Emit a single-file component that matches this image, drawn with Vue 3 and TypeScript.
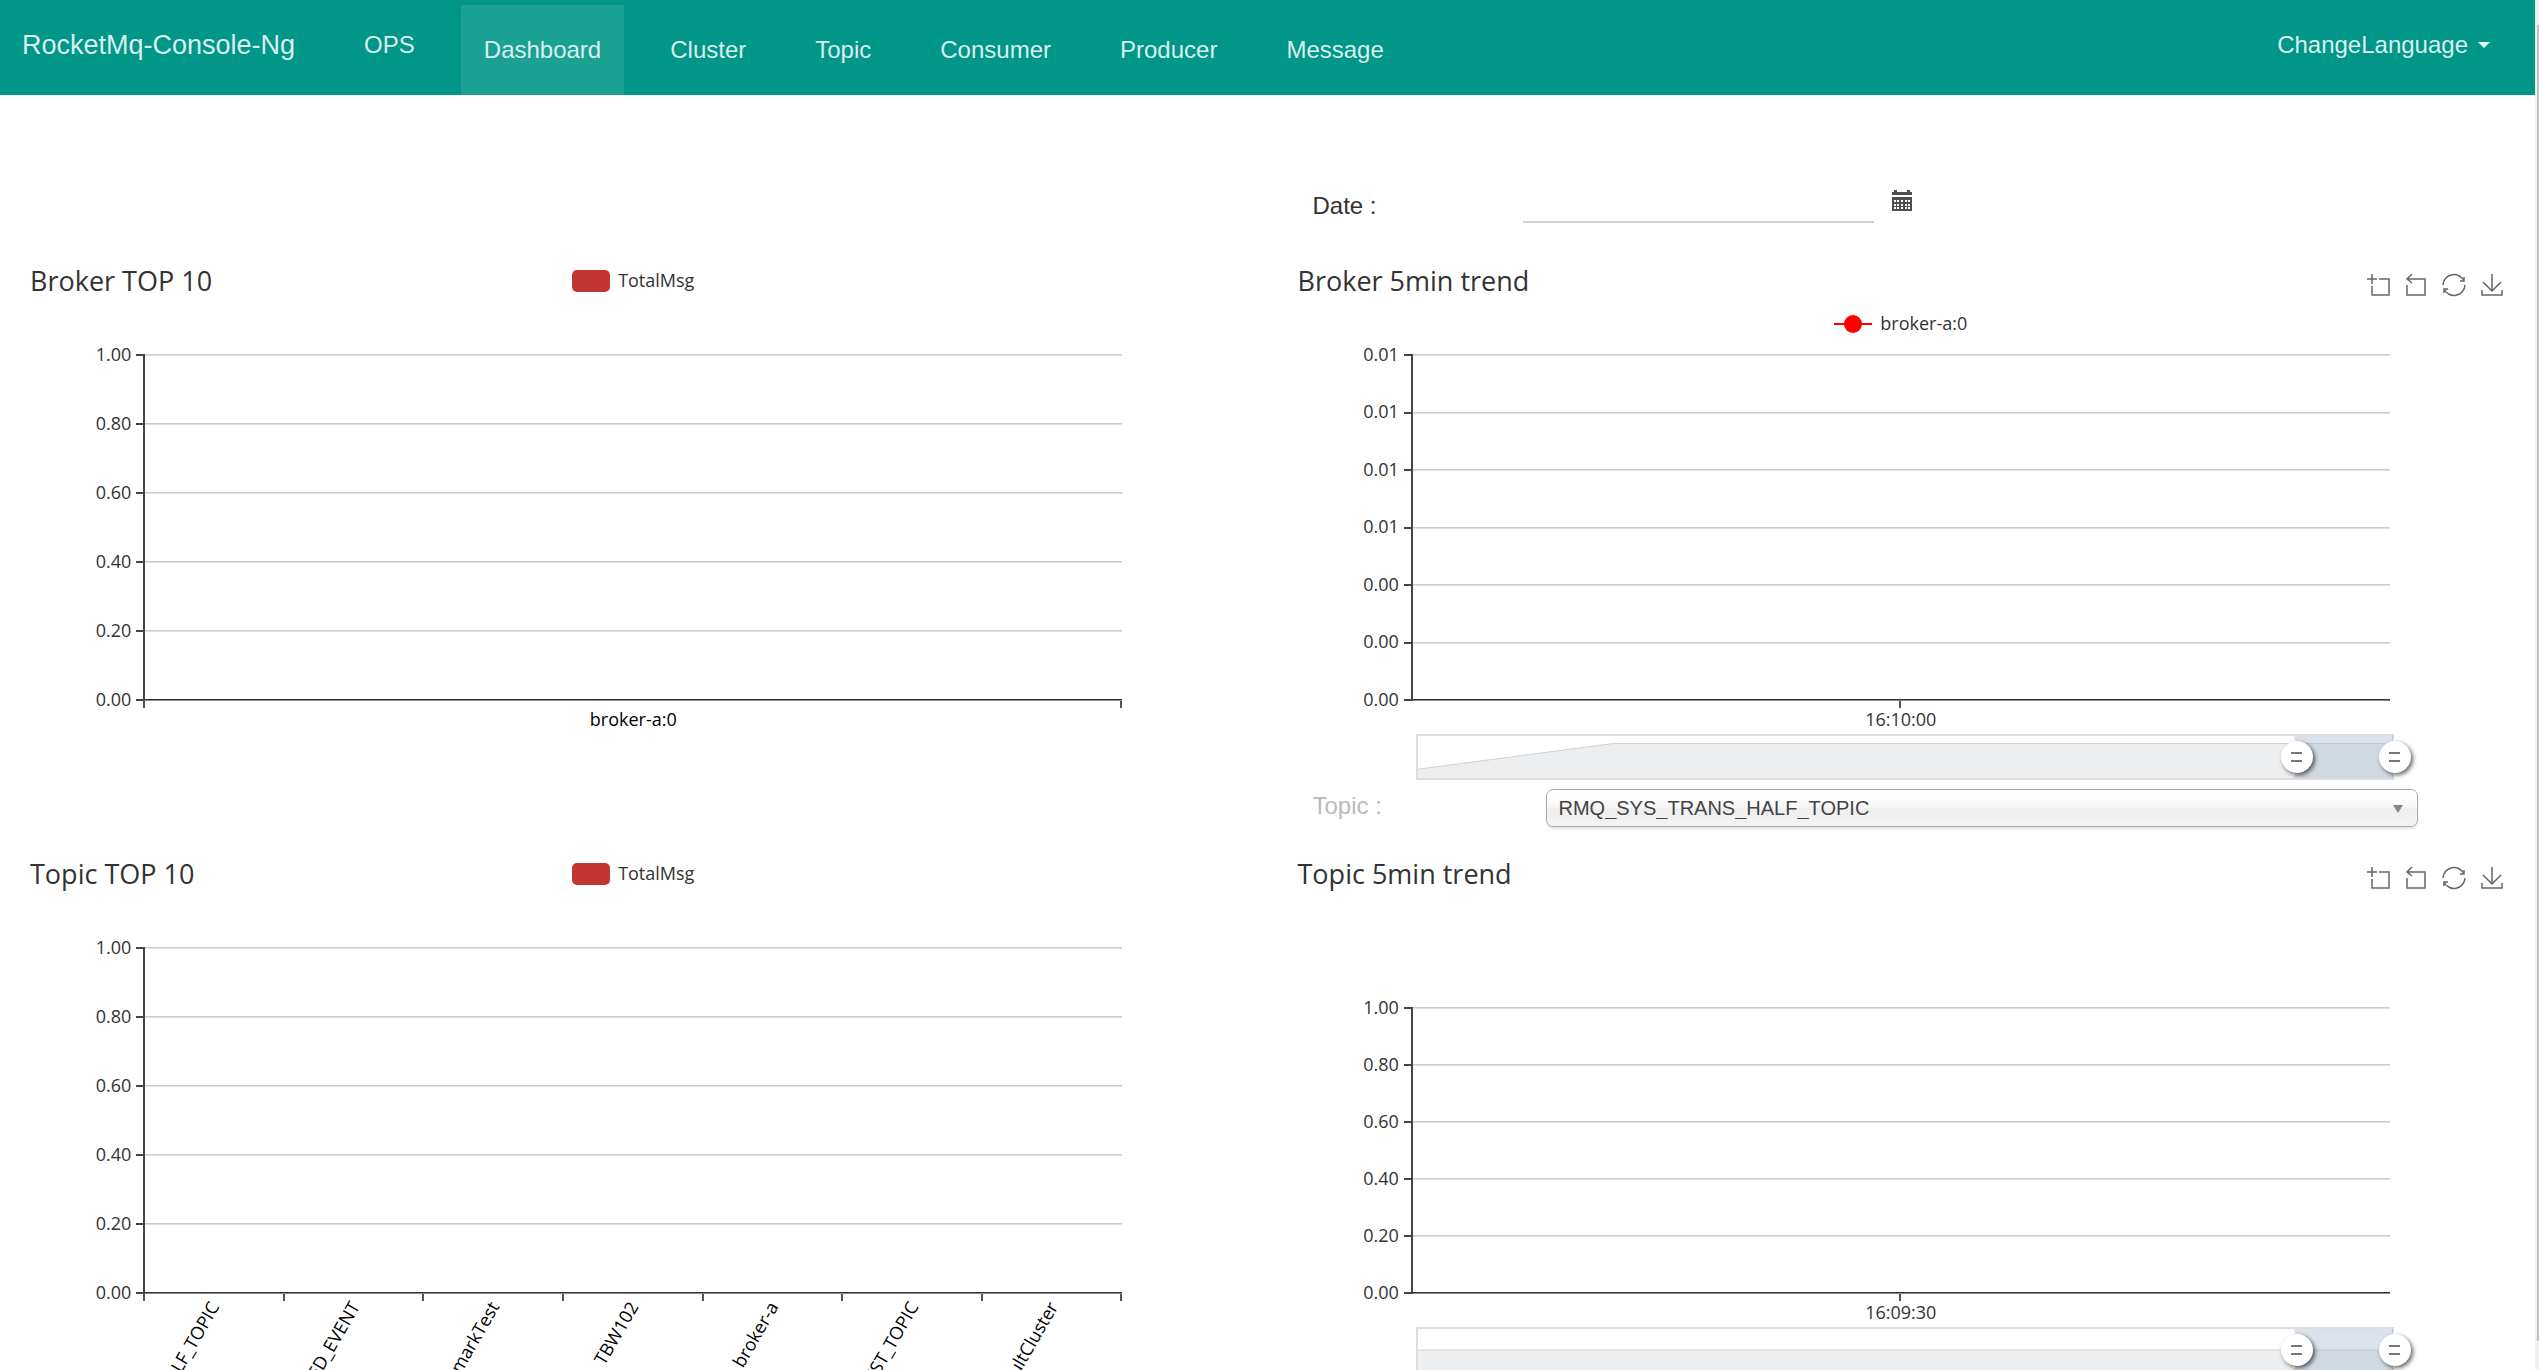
<script setup lang="ts">
import { ref } from 'vue'

interface Chart {
  id: string
  title: string
  legend?: { label: string; kind: 'bar' | 'line' }
  yLabels: string[]
  xLabels: string[]
  rotated?: boolean
  trend: boolean
  // outline of the series drawn inside the zoom bar, in percent of its box
  shadow?: string
}

const unitScale = ['1.00', '0.80', '0.60', '0.40', '0.20', '0.00']

const rows: Chart[][] = [
  [
    {
      id: 'broker-top',
      title: 'Broker TOP 10',
      legend: { label: 'TotalMsg', kind: 'bar' },
      yLabels: unitScale,
      xLabels: ['broker-a:0'],
      trend: false,
    },
    {
      id: 'broker-trend',
      title: 'Broker 5min trend',
      legend: { label: 'broker-a:0', kind: 'line' },
      yLabels: ['0.01', '0.01', '0.01', '0.01', '0.00', '0.00', '0.00'],
      xLabels: ['16:10:00'],
      trend: true,
      shadow: '0,79 20,18 100,18',
    },
  ],
  [
    {
      id: 'topic-top',
      title: 'Topic TOP 10',
      legend: { label: 'TotalMsg', kind: 'bar' },
      yLabels: unitScale,
      xLabels: [
        'RMQ_SYS_TRANS_HALF_TOPIC',
        'OFFSET_MOVED_EVENT',
        'BenchmarkTest',
        'TBW102',
        'broker-a',
        'SELF_TEST_TOPIC',
        'DefaultCluster',
      ],
      rotated: true,
      trend: false,
    },
    {
      id: 'topic-trend',
      title: 'Topic 5min trend',
      yLabels: unitScale,
      xLabels: ['16:09:30'],
      trend: true,
      shadow: '0,50 100,50',
    },
  ],
]

const links = ['Dashboard', 'Cluster', 'Topic', 'Consumer', 'Producer', 'Message']
const active = ref('Dashboard')
const date = ref('')
const topic = ref('RMQ_SYS_TRANS_HALF_TOPIC')

const tools = [
  { name: 'Zoom', d: 'M1 6h10M6 1v10M13 6h10v16H6v-9' },
  { name: 'Zoom reset', d: 'M3 12v10h18V6H3M8 1L3 6l5 4' },
  { name: 'Restore', d: 'M1 12A11 11 0 0 1 22 8M22 4v4h-4M23 12A11 11 0 0 1 2 16M2 20v-4h4' },
  { name: 'Save as image', d: 'M12 1v17M3 9l9 9 9-9M2 17v5h20v-5' },
]
</script>

<template>
  <div class="page">
    <div class="content">
      <nav class="navbar">
        <a class="brand" href="#">RocketMq-Console-Ng</a>
        <a class="nav-link ops" href="#ops">OPS</a>
        <a
          v-for="link in links"
          :key="link"
          class="nav-link"
          :class="{ active: link === active }"
          :href="'#' + link.toLowerCase()"
          @click="active = link"
          >{{ link }}</a
        >
        <button class="language" type="button">
          ChangeLanguage <span class="caret"></span>
        </button>
      </nav>

      <div class="filter date-filter">
        <label for="date">Date :</label>
        <input id="date" v-model="date" type="text" />
        <button class="calendar" type="button" aria-label="Pick a date">
          <svg viewBox="0 0 20 22" width="20" height="22">
            <path
              fill="#4f4f4f"
              fill-rule="evenodd"
              d="M0 2h2V0h3v2h10V0h3v2h2v3H0zM0 7h20v14H0zM2 10v2h2v-2zM5 10v2h2v-2zM9 10v2h2v-2zM13 10v2h2v-2zM16 10v2h2v-2zM2 14v2h2v-2zM5 14v2h2v-2zM9 14v2h2v-2zM13 14v2h2v-2zM16 14v2h2v-2zM2 17v2h2v-2zM5 17v2h2v-2zM9 17v2h2v-2zM13 17v2h2v-2zM16 17v2h2v-2z"
            />
          </svg>
        </button>
      </div>

      <template v-for="(row, r) in rows" :key="r">
        <div v-if="r === 1" class="filter topic-filter">
          <label for="topic">Topic :</label>
          <div class="select-box">
            <select id="topic" v-model="topic">
              <option>RMQ_SYS_TRANS_HALF_TOPIC</option>
            </select>
            <span class="select-arrow"></span>
          </div>
        </div>

        <div class="chart-row">
          <section v-for="c in row" :key="c.id" class="chart">
            <header class="head" :class="{ trend: c.trend, tall: c.trend && !c.legend }">
              <h2>{{ c.title }}</h2>
              <div v-if="c.legend" class="legend">
                <span :class="['mark', c.legend.kind]"></span>
                <span>{{ c.legend.label }}</span>
              </div>
              <div v-if="c.trend" class="toolbox">
                <button v-for="t in tools" :key="t.name" type="button" :aria-label="t.name">
                  <svg viewBox="0 0 24 24" width="24" height="24"><path :d="t.d" /></svg>
                </button>
              </div>
            </header>

            <div class="body">
              <div class="y-axis">
                <div v-for="(y, i) in c.yLabels" :key="i" class="y-label">
                  <span>{{ y }}</span>
                </div>
              </div>
              <div class="plot" :class="{ short: c.trend && !c.legend }">
                <i v-for="(y, i) in c.yLabels" :key="i" class="grid-line"></i>
              </div>
              <div class="x-axis">
                <div class="ticks" :class="{ middle: c.trend }">
                  <i v-for="n in c.trend ? 2 : c.xLabels.length" :key="n"></i>
                </div>
                <div class="x-labels" :class="{ rotated: c.rotated, time: c.trend }">
                  <div v-for="x in c.xLabels" :key="x" class="x-cell">
                    <span>{{ x }}</span>
                  </div>
                </div>
                <div v-if="c.trend" class="zoom">
                  <svg viewBox="0 0 100 100" preserveAspectRatio="none">
                    <polygon :points="'0,100 ' + c.shadow + ' 100,100'" fill="#eceef0" />
                    <polyline :points="c.shadow" />
                  </svg>
                  <div class="window"></div>
                  <input type="range" min="0" max="100" value="90" aria-label="Range start" />
                  <input type="range" min="0" max="100" value="100" aria-label="Range end" />
                </div>
              </div>
            </div>
          </section>
        </div>
      </template>
    </div>
    <div class="scrollbar"><div class="thumb"></div></div>
  </div>
</template>

<style>
body {
  margin: 0;
  background: #fff;
}
</style>

<style scoped>
* {
  box-sizing: border-box;
}

.page {
  display: flex;
  height: 100vh;
  overflow: hidden;
  font-family: 'Liberation Sans', Arial, sans-serif;
  font-size: 24px;
  color: #333;
}

.content {
  flex: 1;
  min-width: 0;
}

.scrollbar {
  width: 4px;
  padding: 25px 0 29px 2px;
  background: #f0f0f0;
}

.thumb {
  height: 100%;
  background: #c1c1c1;
}

button {
  padding: 0;
  border: 0;
  background: none;
  font: inherit;
  cursor: pointer;
}

.navbar {
  display: flex;
  gap: 23px;
  height: 95px;
  padding: 0 45px 0 22px;
  background: #009688;
}

.navbar a,
.language {
  color: #d9efed;
  line-height: 90px;
  text-decoration: none;
}

.brand {
  margin-right: 23px;
  font-size: 27px;
}

.navbar .nav-link {
  margin-top: 5px;
  padding: 0 23px;
}

.navbar .ops {
  margin-top: 0;
}

.nav-link.active {
  background: #1aa193;
}

.language {
  display: flex;
  align-items: center;
  gap: 10px;
  height: 90px;
  margin-left: auto;
}

.caret {
  border: 6px solid transparent;
  border-top-color: #e6f4f3;
  border-bottom: 0;
}

.filter {
  display: grid;
  align-items: start;
  margin-left: 50%;
  padding-left: 45px;
}

.date-filter {
  grid-template-columns: 210px minmax(0, 351fr) minmax(0, 661fr);
  height: 170px;
  padding-top: 88px;
}

.date-filter label {
  padding-top: 8px;
  line-height: 30px;
}

.date-filter input {
  height: 40px;
  padding: 0;
  border: 0;
  border-bottom: 2px solid #d2d2d2;
  outline: 0;
  background: none;
  font: inherit;
}

.calendar {
  width: 20px;
  height: 22px;
  margin: 7px 0 0 18px;
}

.calendar svg,
.toolbox svg {
  display: block;
}

.topic-filter {
  grid-template-columns: 233px minmax(0, 872fr) minmax(0, 117fr);
  height: 69px;
}

.topic-filter label {
  color: #bbb;
  line-height: 34px;
}

.select-box {
  position: relative;
}

.select-box select {
  display: block;
  width: 100%;
  height: 38px;
  padding: 0 12px;
  border: 1px solid #aaa;
  border-radius: 7px;
  background: linear-gradient(#fff 20%, #f6f6f6 50%, #eee 52%, #f4f4f4 100%);
  box-shadow: 0 2px 2px rgba(0, 0, 0, 0.1);
  appearance: none;
  color: #444;
  font-family: inherit;
  font-size: 20px;
}

.select-arrow {
  position: absolute;
  top: 16px;
  right: 15px;
  border: 5px solid transparent;
  border-top: 8px solid #888;
  border-bottom: 0;
  pointer-events: none;
}

.chart-row {
  display: grid;
  grid-template-columns: 1fr 1fr;
}

.chart {
  min-width: 0;
  padding: 0 23px 0 22px;
  font-family: 'Open Sans', 'Noto Sans', sans-serif;
  font-size: 18px;
}

.head {
  display: grid;
  grid-template-columns: 1fr auto 1fr;
  grid-template-rows: 32px auto;
  align-content: start;
  height: 89px;
  padding: 0 8px;
}

.head.tall {
  height: 149px;
}

h2 {
  margin: 0;
  font-size: 27px;
  font-weight: 400;
  line-height: 32px;
}

.legend {
  display: flex;
  align-items: center;
  gap: 8px;
  line-height: 32px;
}

.legend span:last-child {
  padding-bottom: 2px;
}

.trend .legend {
  grid-row: 2;
  grid-column: 2;
  padding-top: 10px;
}

.mark.bar {
  width: 38px;
  height: 22px;
  border-radius: 5px;
  background: #c23531;
}

.mark.line {
  display: flex;
  align-items: center;
  justify-content: center;
  width: 38px;
  height: 18px;
  background: linear-gradient(#f00, #f00) center / 100% 2px no-repeat;
}

.mark.line::before {
  content: '';
  width: 18px;
  height: 18px;
  border-radius: 50%;
  background: #f00;
}

.toolbox {
  display: flex;
  grid-row: 1;
  grid-column: 3;
  gap: 14px;
  justify-content: flex-end;
  padding-top: 8px;
}

.toolbox path {
  fill: none;
  stroke: #666;
  stroke-width: 1.5;
}

.body {
  display: grid;
  grid-template-columns: 10% 80%;
}

.y-axis,
.plot {
  display: flex;
  flex-direction: column;
  justify-content: space-between;
}

.y-label {
  display: flex;
  align-items: center;
  justify-content: flex-end;
  gap: 5px;
  height: 2px;
  padding-right: 1px;
  line-height: 22px;
}

.y-label span {
  padding-bottom: 3px;
}

.y-label::after {
  content: '';
  width: 7px;
  height: 2px;
  background: #444;
}

.plot {
  height: 347px;
  margin-left: -1px;
  border-left: 2px solid #444;
}

.plot.short {
  height: 287px;
}

.grid-line {
  height: 2px;
  border-top: 1px solid #ccc;
  border-bottom: 1px solid #e2e2e2;
}

.grid-line:last-child {
  border-color: #333 #888 #888;
}

.x-axis {
  grid-column: 2;
}

.ticks {
  display: flex;
  height: 7px;
  margin-left: -1px;
}

.ticks i {
  flex: 1;
  border-left: 2px solid #555;
}

.ticks i:last-child {
  border-right: 2px solid #555;
}

.ticks.middle i:first-child {
  border-left: 0;
}

.ticks.middle i:last-child {
  border-right: 0;
}

.x-labels {
  display: flex;
  height: 26px;
  color: #000;
}

.x-labels.time {
  color: #333;
}

.x-cell {
  position: relative;
  flex: 1;
  line-height: 22px;
  text-align: center;
}

.rotated span {
  position: absolute;
  top: -9px;
  right: 50%;
  transform: rotate(-60deg);
  transform-origin: right center;
  white-space: nowrap;
}

.zoom {
  position: relative;
  height: 46px;
  margin: 0 -4px 9px 4px;
  border: 2px solid #ddd;
}

.zoom svg {
  display: block;
  width: 100%;
  height: 100%;
}

.zoom polyline {
  fill: none;
  stroke: #cdd2d5;
  stroke-width: 1;
  vector-effect: non-scaling-stroke;
}

.window {
  position: absolute;
  inset: 0 -2px 0 90%;
  background: rgba(167, 183, 204, 0.4);
}

.window::before,
.window::after {
  content: '';
  position: absolute;
  top: 3px;
  bottom: 3px;
  width: 2px;
  background: #fff;
}

.window::before {
  left: -1px;
}

.window::after {
  right: -1px;
}

.zoom input {
  position: absolute;
  top: 5px;
  left: -17px;
  width: calc(100% + 36px);
  height: 32px;
  margin: 0;
  background: none;
  appearance: none;
  pointer-events: none;
}

.zoom input::-webkit-slider-thumb {
  width: 32px;
  height: 32px;
  border-radius: 50%;
  background:
    linear-gradient(#777, #777) center 11px / 11px 2px no-repeat,
    linear-gradient(#777, #777) center 19px / 11px 2px no-repeat,
    #fff;
  box-shadow: 2px 2px 4px rgba(0, 0, 0, 0.6);
  appearance: none;
  pointer-events: auto;
}
</style>
